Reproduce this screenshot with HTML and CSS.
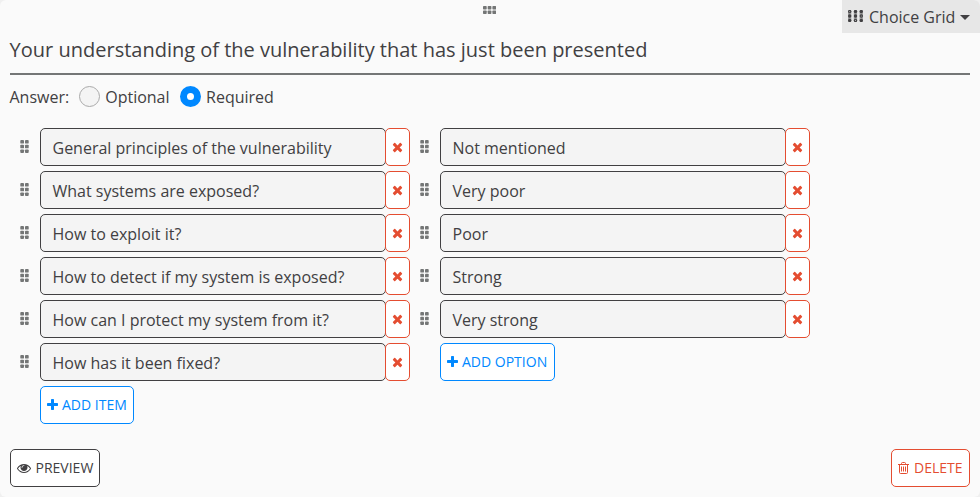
FILE: index.html
```
<!DOCTYPE html>
<html lang="en">
<head>
<meta charset="utf-8">
<title>Choice Grid question</title>
<link rel="stylesheet" href="styles.css">
</head>
<body>
<svg width="0" height="0" class="defs">
  <symbol id="times" viewBox="0 0 1408 1792"><path d="M1298 1322q0 40-28 68l-136 136q-28 28-68 28t-68-28l-294-294-294 294q-28 28-68 28t-68-28l-136-136q-28-28-28-68t28-68l294-294-294-294q-28-28-28-68t28-68l136-136q28-28 68-28t68 28l294 294 294-294q28-28 68-28t68 28l136 136q28 28 28 68t-28 68l-294 294 294 294q28 28 28 68z"/></symbol>
  <symbol id="plus" viewBox="0 0 1408 1792"><path d="M1408 736v192q0 40-28 68t-68 28h-416v416q0 40-28 68t-68 28h-192q-40 0-68-28t-28-68v-416h-416q-40 0-68-28t-28-68v-192q0-40 28-68t68-28h416v-416q0-40 28-68t68-28h192q40 0 68 28t28 68v416h416q40 0 68 28t28 68z"/></symbol>
  <symbol id="grip" viewBox="0 0 9 13"><rect x=".3" y="0" width="3.7" height="3.6" rx=".9"/><rect x="5" y="0" width="3.7" height="3.6" rx=".9"/><rect x=".3" y="4.7" width="3.7" height="3.6" rx=".9"/><rect x="5" y="4.7" width="3.7" height="3.6" rx=".9"/><rect x=".3" y="9.4" width="3.7" height="3.6" rx=".9"/><rect x="5" y="9.4" width="3.7" height="3.6" rx=".9"/></symbol>
</svg>
<main class="card">
  <svg class="card-grip" viewBox="0 0 13 8"><rect x="0" y="0" width="3.7" height="3.5" rx=".7"/><rect x="4.7" y="0" width="3.7" height="3.5" rx=".7"/><rect x="9.4" y="0" width="3.7" height="3.5" rx=".7"/><rect x="0" y="4.5" width="3.7" height="3.5" rx=".7"/><rect x="4.7" y="4.5" width="3.7" height="3.5" rx=".7"/><rect x="9.4" y="4.5" width="3.7" height="3.5" rx=".7"/></svg>
  <div class="type">
    <svg class="type-icon" viewBox="0 0 15 12"><g><rect x="0" y="0" width="3.3" height="12" rx="1.5" opacity=".45"/><rect x="5.8" y="0" width="3.3" height="12" rx="1.5" opacity=".45"/><rect x="11.6" y="0" width="3.3" height="12" rx="1.5" opacity=".45"/><circle cx="1.7" cy="1.6" r="1.7"/><circle cx="7.5" cy="1.6" r="1.7"/><circle cx="13.3" cy="1.6" r="1.7"/><circle cx="1.7" cy="6" r="1.7"/><circle cx="7.5" cy="6" r="1.7"/><circle cx="13.3" cy="6" r="1.7"/><circle cx="1.7" cy="10.4" r="1.7"/><circle cx="7.5" cy="10.4" r="1.7"/><circle cx="13.3" cy="10.4" r="1.7"/></g><g class="holes"><circle cx="1.7" cy="1.6" r=".55"/><circle cx="7.5" cy="10.4" r=".55"/><circle cx="13.3" cy="6" r=".55"/></g></svg>
    <span>Choice Grid</span><i class="caret"></i>
  </div>
  <h1 class="title">Your understanding of the vulnerability that has just been presented</h1>
  <div class="answer"><span>Answer:</span><i class="radio"></i><span>Optional</span><i class="radio checked"></i><span>Required</span></div>
  <div class="columns">
    <div class="column">
      <div class="row"><svg class="grip"><use href="#grip"/></svg><div class="field">General principles of the vulnerability</div><div class="remove"><svg><use href="#times"/></svg></div></div>
      <div class="row"><svg class="grip"><use href="#grip"/></svg><div class="field">What systems are exposed?</div><div class="remove"><svg><use href="#times"/></svg></div></div>
      <div class="row"><svg class="grip"><use href="#grip"/></svg><div class="field">How to exploit it?</div><div class="remove"><svg><use href="#times"/></svg></div></div>
      <div class="row"><svg class="grip"><use href="#grip"/></svg><div class="field">How to detect if my system is exposed?</div><div class="remove"><svg><use href="#times"/></svg></div></div>
      <div class="row"><svg class="grip"><use href="#grip"/></svg><div class="field">How can I protect my system from it?</div><div class="remove"><svg><use href="#times"/></svg></div></div>
      <div class="row"><svg class="grip"><use href="#grip"/></svg><div class="field">How has it been fixed?</div><div class="remove"><svg><use href="#times"/></svg></div></div>
      <div class="button add item"><svg class="plus"><use href="#plus"/></svg><span>ADD ITEM</span></div>
    </div>
    <div class="column">
      <div class="row"><svg class="grip"><use href="#grip"/></svg><div class="field">Not mentioned</div><div class="remove"><svg><use href="#times"/></svg></div></div>
      <div class="row"><svg class="grip"><use href="#grip"/></svg><div class="field">Very poor</div><div class="remove"><svg><use href="#times"/></svg></div></div>
      <div class="row"><svg class="grip"><use href="#grip"/></svg><div class="field">Poor</div><div class="remove"><svg><use href="#times"/></svg></div></div>
      <div class="row"><svg class="grip"><use href="#grip"/></svg><div class="field">Strong</div><div class="remove"><svg><use href="#times"/></svg></div></div>
      <div class="row"><svg class="grip"><use href="#grip"/></svg><div class="field">Very strong</div><div class="remove"><svg><use href="#times"/></svg></div></div>
      <div class="button add option"><svg class="plus"><use href="#plus"/></svg><span>ADD OPTION</span></div>
    </div>
  </div>
  <div class="footer">
    <div class="button preview"><svg class="eye" viewBox="0 0 1792 1792"><path d="M1664 960q-152-236-381-353 61 104 61 225 0 185-131.5 316.5t-316.5 131.5-316.5-131.5-131.5-316.5q0-121 61-225-229 117-381 353 133 205 333.5 326.5t434.5 121.5 434.5-121.5 333.5-326.5zm-720-384q0-20-14-34t-34-14q-125 0-214.5 89.5t-89.5 214.5q0 20 14 34t34 14 34-14 14-34q0-86 61-147t147-61q20 0 34-14t14-34zm848 384q0 34-20 69-140 230-376.5 368.5t-499.5 138.5-499.5-139-376.5-368q-20-35-20-69t20-69q140-229 376.5-368t499.5-139 499.5 139 376.5 368q20 35 20 69z"/></svg><span>PREVIEW</span></div>
    <div class="button delete"><svg class="trash" viewBox="0 0 11 12"><path d="M0 2.5h11M3.5 2.5v-1q0-1 1-1h2q1 0 1 1v1M1.5 2.5v8q0 1 1 1h6q1 0 1-1v-8M3.5 4.5v5M5.5 4.5v5M7.5 4.5v5"/></svg><span>DELETE</span></div>
  </div>
</main>
</body>
</html>
```

FILE: styles.css
```
* { box-sizing: border-box; }
body { margin: 0; background: #f0f0f0; color: #414042; font: 16px/24px "Open Sans", sans-serif; }
svg { display: block; flex: none; fill: currentColor; }
.defs { position: absolute; }
.card { position: relative; height: 497px; padding: 6px 10px 0; background: #fafafa; border-radius: 6px; overflow: hidden; }
.card-grip { width: 13px; height: 8px; margin: 0 auto; color: #747676; position: relative; left: -1px; }
.type { position: absolute; top: 0; right: 0; width: 138px; height: 33px; padding-left: 6px; display: flex; align-items: center; background: #e7e7e7; }
.type-icon { width: 15px; height: 12px; margin: -2px 6px 0 0; }
.type-icon .holes { fill: #aaa; }
.caret { margin: 2px 0 0 4.5px; border: 5px solid transparent; border-top: 5px solid #414042; border-bottom: 0; }
.title { height: 61px; margin: 0; padding-top: 21px; border-bottom: 2px solid #747676; font-size: 20px; line-height: 30px; font-weight: 400; white-space: nowrap; text-indent: -0.4px; }
.answer { display: flex; align-items: center; height: 22px; margin: 11px 0 0 -0.5px; }
.radio { width: 21px; height: 21px; margin: -1px 5px 0 10px; border: 1px solid #aaa; border-radius: 50%; background: #f4f4f4; }
.radio.checked { margin-left: 10.5px; border: 7px solid #0088ff; background: #fff; }
.columns { display: flex; margin: 20px 0 0 5px; }
.column { width: 400px; display: flex; flex-direction: column; gap: 5px; }
.row { display: flex; height: 38px; }
.grip { width: 9px; height: 13px; margin: 12px 11px 0 5px; color: #747676; }
.field { width: 346px; padding: 7px 11.5px 0; border: 1px solid #414042; border-radius: 5px; background: #f4f4f4; white-space: nowrap; }
.remove { width: 25px; margin-left: -1px; border: 1px solid #e44d31; border-radius: 5px; background: #fff; color: #e44d31; display: flex; align-items: center; padding-left: 5.5px; }
.remove svg { width: 11px; height: 14px; }
.button { display: flex; align-items: center; height: 38px; padding: 0 5px; border: 1px solid currentColor; border-radius: 5px; background: #fff; font-size: 14px; line-height: 20px; white-space: nowrap; }
.add { margin-left: 25px; color: #0088ff; }
.item { width: 94px; }
.option { width: 115px; }
.plus { width: 11px; height: 14px; margin: 0 4.5px 0 .5px; }
.footer { display: flex; justify-content: space-between; margin-top: 25px; }
.preview { width: 90px; }
.eye { width: 14px; height: 14px; margin: 0 5px 0 .5px; }
.delete { width: 79px; color: #e44d31; }
.trash { width: 11px; height: 12px; margin: 0 5px 0 1px; fill: none; stroke: currentColor; stroke-width: 1; }
```
